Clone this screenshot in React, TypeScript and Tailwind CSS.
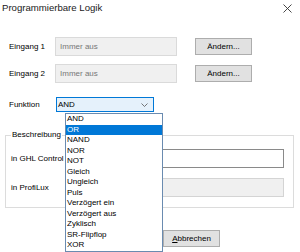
const functions = [
  "AND",
  "OR",
  "NAND",
  "NOR",
  "NOT",
  "Gleich",
  "Ungleich",
  "Puls",
  "Verzögert ein",
  "Verzögert aus",
  "Zyklisch",
  "SR-Flipflop",
  "XOR",
];

function WinButton({ children }: { children: React.ReactNode }) {
  return (
    <button className="flex h-[17px] w-[57px] items-center justify-center border border-[#adadad] bg-[#e1e1e1] text-[8px] text-black">
      {children}
    </button>
  );
}

function InputRow({ label }: { label: string }) {
  return (
    <div className="flex items-center">
      <span className="w-[55px] pl-[9px] leading-none">{label}</span>
      <div className="flex h-[19px] w-[122px] items-center border border-[#dadada] bg-[#f0f0f0] pl-[4px] text-[#777]">
        Immer aus
      </div>
      <div className="ml-[18px]">
        <WinButton>Ändern...</WinButton>
      </div>
    </div>
  );
}

export default function App() {
  const selected = "OR";

  return (
    <div className="relative h-[252px] w-[300px] overflow-hidden bg-white font-['Liberation_Sans',Arial,sans-serif] text-[8px] text-black">
      {/* title bar */}
      <div className="flex h-[16px] items-center justify-between pl-[2px] pr-[8px]">
        <span className="text-[9.6px] text-[#1a1a1a]">Programmierbare Logik</span>
        <svg width="9" height="9" viewBox="0 0 9 9" className="text-[#333]">
          <path d="M0.5 0.5 L8.5 8.5 M8.5 0.5 L0.5 8.5" stroke="currentColor" strokeWidth="0.9" />
        </svg>
      </div>

      <div className="mt-[21px] flex flex-col gap-[8px]">
        <InputRow label="Eingang 1" />
        <InputRow label="Eingang 2" />
      </div>

      {/* Funktion */}
      <div className="mt-[14px] flex items-center">
        <span className="w-[56px] pl-[9px] leading-none">Funktion</span>
        <div className="flex h-[15px] w-[98px] items-center justify-between border border-[#0078d7] bg-[#e5f1fb] pl-[1px] pr-[5px]">
          <span>AND</span>
          <svg width="7" height="4" viewBox="0 0 7 4" className="text-[#555]">
            <path d="M0.5 0.5 L3.5 3.5 L6.5 0.5" fill="none" stroke="currentColor" strokeWidth="0.8" />
          </svg>
        </div>
      </div>

      {/* Beschreibung */}
      <fieldset className="ml-[5px] mt-[17px] w-[289px] border border-[#dcdcdc] pb-[10px] pl-[5px] pr-[9px]">
        <legend className="px-[1px] leading-[12px]">Beschreibung</legend>
        <div className="mt-[8px] flex items-center">
          <span className="w-[75px] shrink-0 leading-none">in GHL Control</span>
          <div className="h-[19px] flex-1 border border-[#8a8a8a] bg-white" />
        </div>
        <div className="mt-[10px] flex items-center">
          <span className="w-[75px] shrink-0 leading-none">in ProfiLux</span>
          <div className="h-[19px] flex-1 border border-[#d4d4d4] bg-[#f0f0f0]" />
        </div>
      </fieldset>

      <div className="mt-[22px] flex gap-[6px] pl-[100px]">
        <WinButton>OK</WinButton>
        <WinButton>
          <span>
            <span className="underline">A</span>bbrechen
          </span>
        </WinButton>
      </div>

      {/* open dropdown list */}
      <ul className="absolute left-[65px] top-[113px] w-[98px] border border-[#6a8bb0] bg-white">
        {functions.map((f) => (
          <li
            key={f}
            className={
              f === selected
                ? "flex h-[10.5px] items-center bg-[#0078d7] pl-[1px] text-white"
                : "flex h-[10.5px] items-center pl-[1px] text-black"
            }
          >
            {f}
          </li>
        ))}
      </ul>
    </div>
  );
}
